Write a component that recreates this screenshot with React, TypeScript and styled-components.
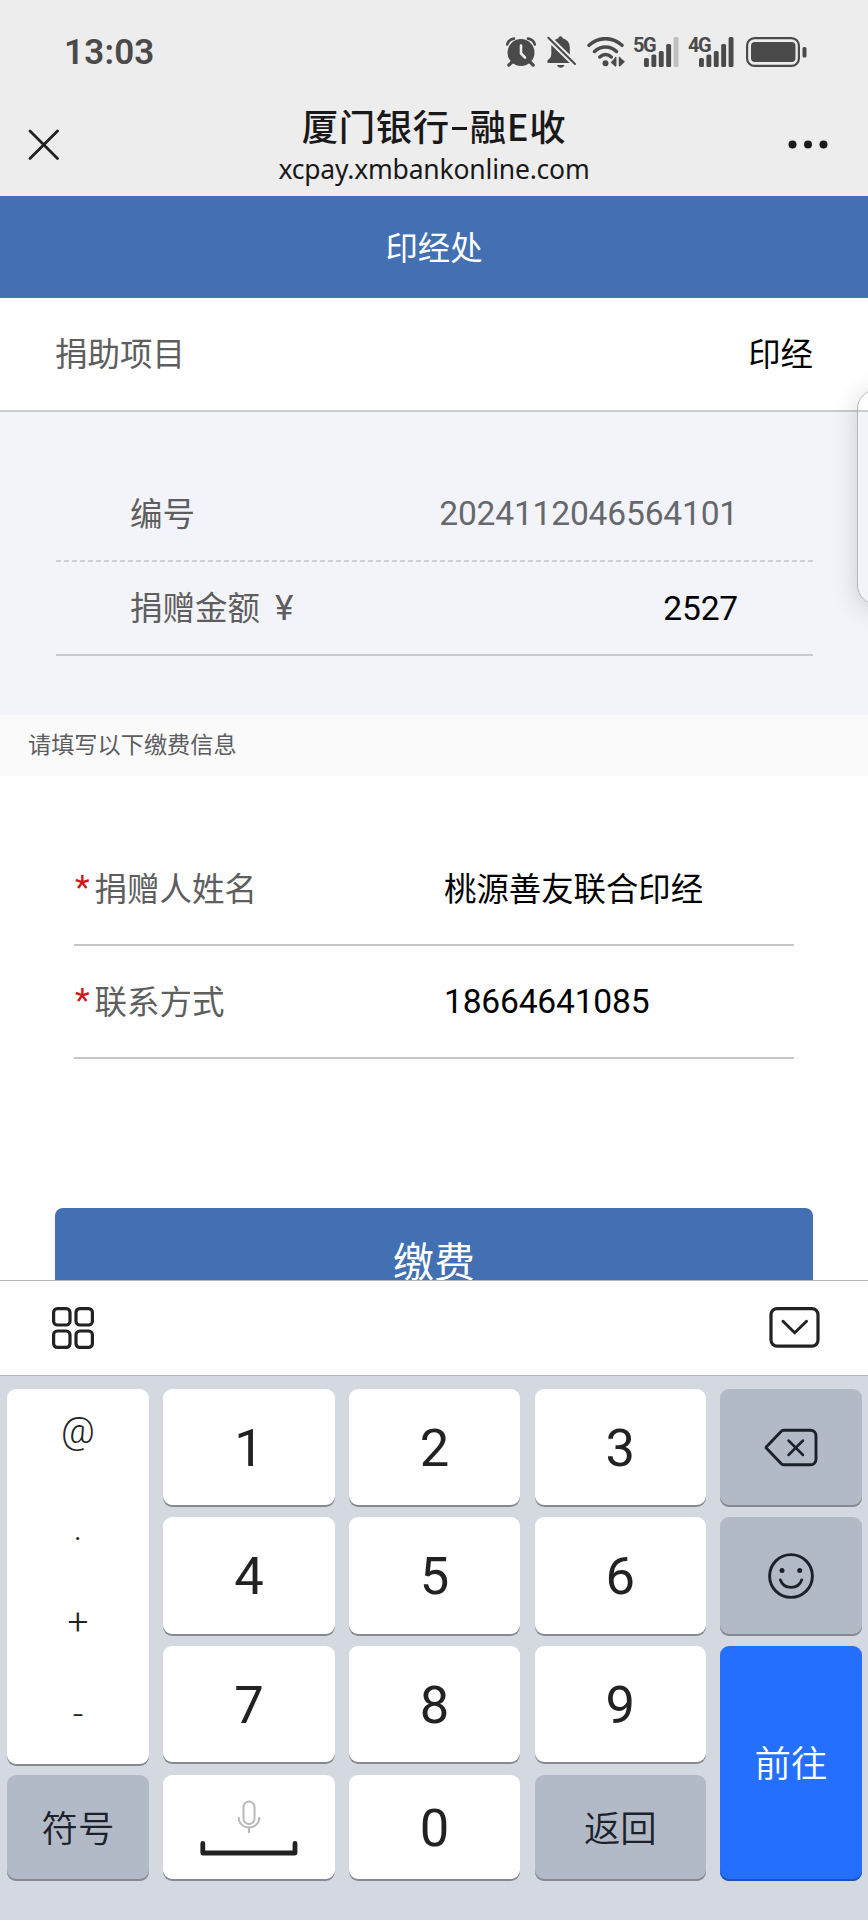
import React from "react";
import styled, { createGlobalStyle } from "styled-components";

const cjk = `"Noto Sans CJK SC", sans-serif`;
const mixed = `Roboto, "Noto Sans CJK SC", sans-serif`;

const GlobalStyle = createGlobalStyle`
  *, *::before, *::after { box-sizing: border-box; }
  body { margin: 0; background: #fff; font-family: ${cjk}; color: #000; }
  button { font: inherit; border: 0; padding: 0; margin: 0; }
  svg { display: block; flex: none; }
`;

const Screen = styled.div`
  position: relative;
  display: flex;
  flex-direction: column;
  width: 868px;
  height: 1920px;
  overflow: hidden;
  background: #fefefe;
`;

const Header = styled.header`
  flex: none;
  height: 196px;
  background: #ededed;
`;

const StatusBar = styled.div`
  display: flex;
  align-items: center;
  justify-content: space-between;
  height: 104px;
  padding: 0 61px 0 64px;
  color: #4a4a4a;
`;

const Clock = styled.span`
  padding-top: 2px;
  font: 600 35px/40px Roboto, sans-serif;
  letter-spacing: 0.2px;
`;

const StatusIcons = styled.div`
  display: flex;
  align-items: center;
`;

const Gap = styled.span<{ $w: number }>`
  width: ${(p) => p.$w}px;
`;

const Signal = styled.div`
  position: relative;
  width: 46px;
  height: 30px;
`;

const Generation = styled.span`
  position: absolute;
  left: 0;
  top: 0;
  font: 700 20px/16px Roboto, sans-serif;
  letter-spacing: -1.5px;
`;

const NavBar = styled.div`
  display: grid;
  grid-template-columns: 60px 1fr 60px;
  height: 92px;
  padding: 0 26px;
`;

const NavIcon = styled.div<{ $end?: boolean }>`
  display: flex;
  height: 81px;
  align-items: center;
  justify-content: ${(p) => (p.$end ? "flex-end" : "flex-start")};
  padding: 0 ${(p) => (p.$end ? 14 : 0)}px 0 ${(p) => (p.$end ? 0 : 2)}px;
`;

const Titles = styled.div`
  display: flex;
  flex-direction: column;
  align-items: center;
  color: #191919;
`;

const Title = styled.h1`
  margin: 0;
  font: 500 36.4px/42px ${cjk};
  letter-spacing: 0.6px;
  white-space: nowrap;
`;

const Dash = styled.span`
  display: inline-block;
  width: 15px;
  height: 3px;
  margin: 0 3px 11px 2px;
  vertical-align: baseline;
  background: currentColor;
`;

const Url = styled.div`
  padding-top: 5px;
  font: 430 26.5px/36px "Noto Sans", sans-serif;
  letter-spacing: -0.2px;
  white-space: nowrap;
`;

const Banner = styled.div`
  display: flex;
  flex: none;
  align-items: center;
  justify-content: center;
  height: 102px;
  padding-bottom: 3px;
  background: #4270b3;
  color: #fff;
  font-size: 32.4px;
  line-height: 40px;
`;

const ProjectRow = styled.div`
  display: flex;
  flex: none;
  align-items: center;
  justify-content: space-between;
  height: 114px;
  padding: 0 55px 4px;
  border-bottom: 2px solid #c9cbcd;
  background: #fff;
`;

const Label = styled.span`
  color: #5e5e5e;
  font: 400 32.5px/40px ${cjk};
  white-space: pre;
`;

const Yen = styled.span`
  margin-left: 15px;
  font: 400 35px/40px ${mixed};
`;

const Value = styled.span<{ $muted?: boolean; $num?: boolean }>`
  color: ${(p) => (p.$muted ? "#66686c" : "#000")};
  font-family: ${(p) => (p.$num ? mixed : cjk)};
  font-size: ${(p) => (p.$num ? 33.6 : 32.4)}px;
  letter-spacing: ${(p) => (p.$num ? -0.2 : 0)}px;
  line-height: 40px;
`;

const Details = styled.section`
  flex: none;
  height: 303px;
  padding: 56px 55px 0 55.5px;
  background: #f3f4f9;
`;

const DetailRow = styled.div<{ $dashed?: boolean }>`
  display: flex;
  align-items: center;
  justify-content: space-between;
  height: 94px;
  padding: 0 75px 0 74.5px;
  ${(p) =>
    p.$dashed
      ? `background: repeating-linear-gradient(90deg, #cfd1d4 0 5px, transparent 5px 8px) left bottom 0 / 100% 2px no-repeat;`
      : `border-bottom: 2px solid #c8cacf;`}

  ${Label} {
    padding-bottom: ${(p) => (p.$dashed ? 6 : 2)}px;
  }

  ${Value} {
    padding-bottom: ${(p) => (p.$dashed ? 2 : 0)}px;
    padding-top: ${(p) => (p.$dashed ? 0 : 2)}px;
  }
`;

const Notice = styled.div`
  display: flex;
  flex: none;
  align-items: center;
  height: 61px;
  padding: 0 0 5px 28px;
  background: #fafafb;
  color: #5c5d60;
  font-size: 23.2px;
  line-height: 30px;
`;

const Form = styled.section`
  flex: none;
  padding: 57px 74px 0;
`;

const Field = styled.label`
  display: grid;
  grid-template-columns: 20.5px 349.5px 1fr;
  align-items: center;
  height: 113px;
  padding-bottom: 2px;
  border-bottom: 2px solid #c6c6c6;

  ${Label} {
    padding-bottom: 2px;
  }
`;

const FieldValue = styled(Value)`
  padding: ${(p) => (p.$num ? "2px 0 0" : "0 0 1px")};
`;

const Star = styled.span`
  padding: 0 0 1px 1px;
  color: #d0161b;
  font: 400 34px/40px Roboto, sans-serif;
`;

const ButtonArea = styled.div`
  flex: none;
  height: 221px;
  padding: 149px 55px 0 55px;
  overflow: hidden;
`;

const PayButton = styled.button`
  display: block;
  width: 100%;
  height: 108px;
  border-radius: 8px;
  background: #4270b3;
  color: #fff;
  font-size: 41px;
  line-height: 103px;
  padding-bottom: 5px;
`;

const Toolbar = styled.div`
  display: flex;
  flex: none;
  align-items: center;
  justify-content: space-between;
  height: 96px;
  padding: 0 48px 1px 52px;
  border-top: 1px solid #b4b6b8;
  border-bottom: 1px solid #b4b6b8;
  background: #fefefe;
`;

const Keyboard = styled.div`
  display: grid;
  flex: 1;
  grid-template-columns: 142px 171.5px 171.5px 171.5px 141.5px;
  grid-template-rows: 118px 118.5px 118px 106px;
  column-gap: 14.2px;
  row-gap: 10.5px;
  padding: 12.5px 6px 0 7px;
  background: #d4d8e0;
  color: #222;
`;

const Key = styled.button<{ $tone?: "grey" | "blue"; $rows?: number }>`
  display: flex;
  flex-direction: column;
  align-items: center;
  justify-content: center;
  grid-row: span ${(p) => p.$rows ?? 1};
  padding-bottom: ${(p) => (p.$tone ? 4 : 0)}px;
  border-radius: 9px;
  background: ${(p) => (p.$tone === "blue" ? "#256fff" : p.$tone === "grey" ? "#b3bac7" : "#fff")};
  box-shadow: inset 0 -2px 0 ${(p) => (p.$tone === "blue" ? "#1b53bd" : "#86898f")};
  color: ${(p) => (p.$tone === "blue" ? "#fff" : p.$tone === "grey" ? "#1c222b" : "#222")};
  font: ${(p) => (p.$tone ? `350 36.4px/44px ${cjk}` : `370 52.5px/60px ${mixed}`)};
`;

const IconKey = styled(Key)`
  padding-bottom: 0;
`;

const SymbolKey = styled(Key)`
  justify-content: flex-start;
  margin: 0.5px 0 -2px;
`;

const SymbolCell = styled.span<{ $lift?: number }>`
  height: 93px;
  font: 350 37px/${(p) => 94 - (p.$lift ?? 0) * 2}px ${mixed};
`;

const EdgeClip = styled.div`
  position: absolute;
  top: 340px;
  right: 0;
  width: 60px;
  height: 320px;
  overflow: hidden;
  pointer-events: none;
`;

const EdgePanel = styled.div`
  position: absolute;
  top: 49px;
  left: 49px;
  width: 80px;
  height: 216px;
  border: 1.5px solid #b4b5b8;
  border-radius: 20px;
  box-shadow: 0 4px 26px rgba(0, 0, 0, 0.17);
`;

const AlarmIcon = () => (
  <svg width="30" height="30" viewBox="0 0 30 30" fill="none" stroke="currentColor" strokeLinecap="round">
    <circle cx="15" cy="15.5" r="13.5" fill="currentColor" stroke="none" />
    <path d="M1.2 7.5Q2.5 2.5 8 1.6M28.8 7.5Q27.5 2.5 22 1.6" strokeWidth="2.6" />
    <path d="M6 25 2.8 28.2M24 25l3.2 3.2" strokeWidth="3.2" />
    <path d="M15 8.5v8l4 4" stroke="#ededed" strokeWidth="2.6" />
  </svg>
);

const BellOffIcon = () => (
  <svg width="29" height="32" viewBox="0 0 29 32" fill="currentColor">
    <path d="M13.5.3c1.3 0 2 .8 2 2 4.6 1 7.3 4.6 7.3 9.2V18c0 3 1.6 4.6 4 6.3v2.8H.5v-2.8c2.4-1.7 3.8-3.3 3.8-6.3v-6.500c0-4.600 2.700-8.200 7.200-9.200 0-1.200.7-2 2-2z" />
    <path d="M10 29h7.500c-.8 1.900-2 2.700-3.700 2.700S10.800 30.900 10 29z" />
    <path d="M-1-.5 30 30" stroke="#ededed" strokeWidth="6" />
    <path d="M1.3 1.8 28 28" stroke="currentColor" strokeWidth="2" strokeLinecap="round" />
  </svg>
);

const WifiIcon = () => (
  <svg width="38" height="31" viewBox="0 0 38 31" fill="none" stroke="currentColor" strokeLinecap="round" strokeWidth="3.5">
    <path d="M2 8.3C11.5-.6 25.5-.6 35 8.3" />
    <path d="M7.5 14.5c6.500-6 15.500-6 22 0" />
    <path d="M12.800 20c3.500-3.200 8-3.200 11.500 0" />
    <circle cx="18.5" cy="26.3" r="3" fill="currentColor" stroke="none" />
    <path d="M28.7 20v10l-5-4.5zM32.5 20l5.5 4.7-5.5 5z" fill="currentColor" stroke="none" />
    <path d="M28.7 20.5v8M32.5 20.5v8" strokeWidth="1.5" />
  </svg>
);

const bars = [
  { x: 11, h: 9 },
  { x: 18.4, h: 12.5 },
  { x: 25.8, h: 16 },
  { x: 33.2, h: 23 },
  { x: 40.6, h: 30 },
];

const SignalIcon = ({ label, level }: { label: string; level: number }) => (
  <Signal>
    <svg width="46" height="30" viewBox="0 0 46 30" fill="currentColor">
      {bars.map((b, i) => (
        <rect key={b.x} x={b.x} y={30 - b.h} width="4.9" height={b.h} rx="1.5" opacity={i < level ? 1 : 0.28} />
      ))}
    </svg>
    <Generation>{label}</Generation>
  </Signal>
);

const BatteryIcon = () => (
  <svg width="61" height="30" viewBox="0 0 61 30" fill="currentColor">
    <rect x="1.1" y="1.1" width="51.8" height="27.8" rx="7.5" fill="none" stroke="currentColor" strokeWidth="2.2" />
    <rect x="5" y="5" width="44.5" height="20" rx="4" />
    <rect x="56.5" y="10" width="4" height="10.5" rx="1.5" />
  </svg>
);

const CloseIcon = () => (
  <svg width="31" height="31" viewBox="0 0 31 31" stroke="#222" strokeWidth="2.8" strokeLinecap="round">
    <path d="M2 2 29.5 29.5M29.5 2 2 29.5" />
  </svg>
);

const MoreIcon = () => (
  <svg width="40" height="9" viewBox="0 0 40 9" fill="#191919">
    <circle cx="4.5" cy="4.5" r="4" />
    <circle cx="20" cy="4.5" r="4" />
    <circle cx="35.5" cy="4.5" r="4" />
  </svg>
);

const AppsIcon = () => (
  <svg width="42" height="42" viewBox="0 0 42 42" fill="none" stroke="#222" strokeWidth="3.2">
    {[1.6, 24].map((x) =>
      [1.6, 24].map((y) => <rect key={`${x}-${y}`} x={x} y={y} width="16.4" height="16.4" rx="3.8" />)
    )}
  </svg>
);

const HideIcon = () => (
  <svg width="51" height="41" viewBox="0 0 51 41" fill="none" stroke="#222" strokeLinejoin="round" strokeLinecap="round">
    <rect x="2" y="1.6" width="47" height="37.5" rx="6" strokeWidth="3.2" />
    <path d="M14 14.3 25.7 25.8 37.5 14.3" strokeWidth="3" />
  </svg>
);

const BackspaceIcon = () => (
  <svg width="55" height="40" viewBox="0 0 55 40" fill="none" stroke="currentColor" strokeLinejoin="round" strokeLinecap="round">
    <path d="M19.5 2.2H46.5a5.500 5.500 0 0 1 5.500 5.500v23.600a5.500 5.500 0 0 1-5.500 5.500H19.500a3 3 0 0 1-2.200-1L2.500 20.300a1.200 1.200 0 0 1 0-1.600L17.300 3.200a3 3 0 0 1 2.200-1z" strokeWidth="2.9" />
    <path d="M25 12.500 39.500 27M39.500 12.500 25 27" strokeWidth="2.500" transform="translate(-.5 0)" />
  </svg>
);

const SmileIcon = () => (
  <svg width="48" height="48" viewBox="0 0 48 48" fill="none" stroke="currentColor" strokeLinecap="round">
    <circle cx="24" cy="24" r="21.4" strokeWidth="2.9" />
    <circle cx="15" cy="18.5" r="2.5" fill="currentColor" stroke="none" />
    <circle cx="32.7" cy="18.5" r="2.5" fill="currentColor" stroke="none" />
    <path d="M13.3 27.8c3.500 10.200 18 10.200 21.500 0" strokeWidth="2.7" />
  </svg>
);

const SpaceIcon = () => (
  <svg width="98" height="56" viewBox="0 0 98 56" fill="none">
    <g stroke="#b8b8b8" strokeWidth="2">
      <rect x="43.5" y="1.5" width="11" height="22.5" rx="5.5" />
      <path d="M38.7 17c0 14 20.600 14 20.600 0M49 27.500V33" />
    </g>
    <path d="M2.8 43.5V53H95V43.5" stroke="#222" strokeWidth="4.8" strokeLinecap="round" strokeLinejoin="round" />
  </svg>
);

export default function App() {
  return (
    <Screen>
      <GlobalStyle />
      <Header>
        <StatusBar>
          <Clock>13:03</Clock>
          <StatusIcons>
            <AlarmIcon />
            <Gap $w={11} />
            <BellOffIcon />
            <Gap $w={11} />
            <WifiIcon />
            <Gap $w={8} />
            <SignalIcon label="5G" level={4} />
            <Gap $w={9} />
            <SignalIcon label="4G" level={5} />
            <Gap $w={12} />
            <BatteryIcon />
          </StatusIcons>
        </StatusBar>
        <NavBar>
          <NavIcon><CloseIcon /></NavIcon>
          <Titles>
            <Title>厦门银行<Dash />融E收</Title>
            <Url>xcpay.xmbankonline.com</Url>
          </Titles>
          <NavIcon $end><MoreIcon /></NavIcon>
        </NavBar>
      </Header>

      <Banner>印经处</Banner>
      <ProjectRow>
        <Label>捐助项目</Label>
        <Value>印经</Value>
      </ProjectRow>
      <Details>
        <DetailRow $dashed>
          <Label>编号</Label>
          <Value $num $muted>2024112046564101</Value>
        </DetailRow>
        <DetailRow>
          <Label>捐赠金额<Yen>¥</Yen></Label>
          <Value $num>2527</Value>
        </DetailRow>
      </Details>
      <Notice>请填写以下缴费信息</Notice>
      <Form>
        <Field>
          <Star>*</Star>
          <Label>捐赠人姓名</Label>
          <FieldValue>桃源善友联合印经</FieldValue>
        </Field>
        <Field>
          <Star>*</Star>
          <Label>联系方式</Label>
          <FieldValue $num>18664641085</FieldValue>
        </Field>
      </Form>
      <ButtonArea>
        <PayButton>缴费</PayButton>
      </ButtonArea>

      <Toolbar>
        <AppsIcon />
        <HideIcon />
      </Toolbar>
      <Keyboard>
        <SymbolKey as="div" $rows={3}>
          <SymbolCell $lift={5}>@</SymbolCell>
          <SymbolCell $lift={1}>.</SymbolCell>
          <SymbolCell>+</SymbolCell>
          <SymbolCell>-</SymbolCell>
        </SymbolKey>
        <Key>1</Key>
        <Key>2</Key>
        <Key>3</Key>
        <IconKey $tone="grey" aria-label="删除"><BackspaceIcon /></IconKey>
        <Key>4</Key>
        <Key>5</Key>
        <Key>6</Key>
        <IconKey $tone="grey" aria-label="表情"><SmileIcon /></IconKey>
        <Key>7</Key>
        <Key>8</Key>
        <Key>9</Key>
        <Key $tone="blue" $rows={2}>前往</Key>
        <Key $tone="grey">符号</Key>
        <Key aria-label="空格"><SpaceIcon /></Key>
        <Key>0</Key>
        <Key $tone="grey">返回</Key>
      </Keyboard>

      <EdgeClip>
        <EdgePanel />
      </EdgeClip>
    </Screen>
  );
}
